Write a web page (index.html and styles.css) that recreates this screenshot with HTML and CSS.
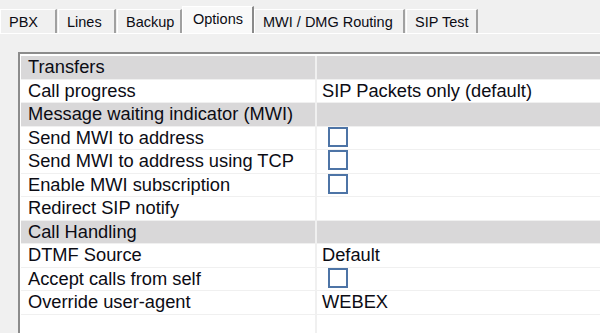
FILE: index.html
```html
<!DOCTYPE html>
<html>
<head>
  <title>Options</title>
  <link rel="stylesheet" href="styles.css">
</head>
<body>
  <div class="tabs">
    <div class="tab tab-pbx">PBX</div>
    <div class="tab tab-lines">Lines</div>
    <div class="tab tab-backup">Backup</div>
    <div class="tab tab-options active">Options</div>
    <div class="tab tab-mwi">MWI / DMG Routing</div>
    <div class="tab tab-sip">SIP Test</div>
  </div>
  <div class="page">
    <div class="grid">
      <div class="row section"><div class="name">Transfers</div><div class="value"></div></div>
      <div class="row"><div class="name">Call progress</div><div class="value">SIP Packets only (default)</div></div>
      <div class="row section"><div class="name">Message waiting indicator (MWI)</div><div class="value"></div></div>
      <div class="row"><div class="name">Send MWI to address</div><div class="value"><span class="check"></span></div></div>
      <div class="row"><div class="name">Send MWI to address using TCP</div><div class="value"><span class="check"></span></div></div>
      <div class="row"><div class="name">Enable MWI subscription</div><div class="value"><span class="check"></span></div></div>
      <div class="row"><div class="name">Redirect SIP notify</div><div class="value"></div></div>
      <div class="row section"><div class="name">Call Handling</div><div class="value"></div></div>
      <div class="row"><div class="name">DTMF Source</div><div class="value">Default</div></div>
      <div class="row"><div class="name">Accept calls from self</div><div class="value"><span class="check"></span></div></div>
      <div class="row"><div class="name">Override user-agent</div><div class="value">WEBEX</div></div>
      <div class="row empty"><div class="name"></div><div class="value"></div></div>
    </div>
  </div>
</body>
</html>
```

FILE: styles.css
```css
body {
  margin: 0;
  background: #f0f0f0;
  font-family: "Liberation Sans", Arial, sans-serif;
  color: #0c0c14;
  overflow: hidden;
  height: 333px;
}
.tabs {
  display: flex;
  align-items: flex-end;
  height: 33px;
}
.tab {
  height: 24px;
  line-height: 24px;
  padding-left: 8px;
  font-size: 14.5px;
  background: #f0f0f0;
  border-left: 1px solid #fff;
  border-top: 1px solid #fff;
  border-right: 2px solid #a0a0a0;
  margin-right: 1px;
  box-sizing: border-box;
  white-space: nowrap;
}
.tab-pbx { width: 57px; }
.tab-lines { width: 58px; }
.tab-backup { width: 65px; }
.tab-options { width: 72px; }
.tab-mwi { width: 151px; }
.tab-sip { width: 72px; }
.tab.active {
  height: 27px;
  line-height: 25px;
  background: #f9f9f9;
  margin-left: -1px;
  margin-right: 0;
  padding-left: 10px;
  border-right-color: #8a8a8a;
}
.page {
  border-top: 1px solid #fff;
  padding: 18px 0 0 18px;
}
.grid {
  width: 620px;
  height: 300px;
  border-top: 2px solid #8c8c8c;
  border-left: 2px solid #8c8c8c;
  background: #fff;
  padding: 2px 0 0 1px;
}
.row {
  display: flex;
  height: 23.5px;
  border-bottom: 1.5px solid #f0f0f0;
  box-sizing: border-box;
  font-size: 18.3px;
  line-height: 22px;
}
.row.section {
  background: #d9d8d9;
}
.name {
  width: 296px;
  padding-left: 7px;
  border-right: 2px solid #f0f0f0;
  box-sizing: border-box;
  white-space: nowrap;
}
.value {
  flex: 1;
  padding-left: 5px;
}
.row.empty {
  height: 40px;
  border-bottom: none;
}
.check {
  display: inline-block;
  width: 20px;
  height: 20px;
  box-sizing: border-box;
  border: 2px solid #4d74a6;
  background: #fff;
  margin-left: 6px;
  vertical-align: top;
}
```
